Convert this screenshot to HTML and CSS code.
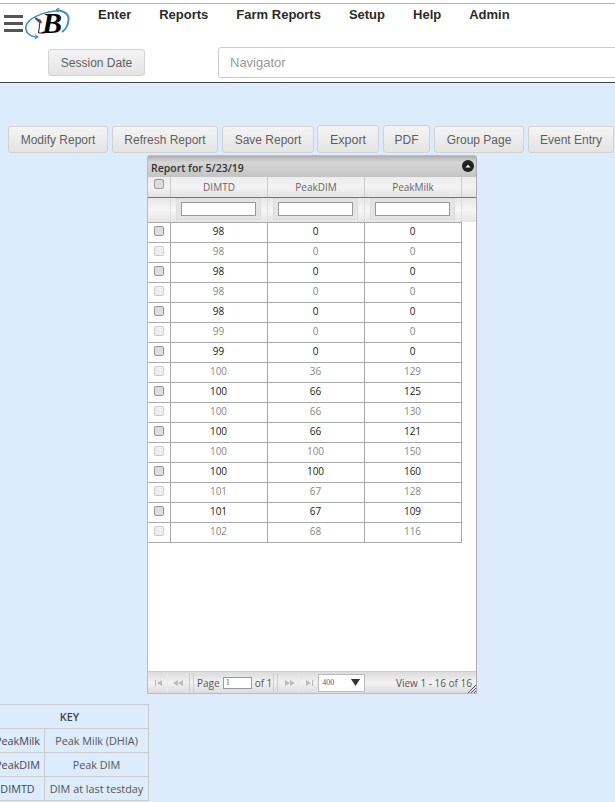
FILE: index.html
```html
<!DOCTYPE html>
<html lang="en">
<head>
<meta charset="utf-8">
<title>Report</title>
<link rel="stylesheet" href="styles.css">
</head>
<body>
<header class="site-header">
  <div class="top-row">
    <div class="burger"><span></span><span></span><span></span></div>
    <svg class="logo" viewBox="0 0 46 32" width="46" height="32">
      <path d="M33 3 C20 3 2 10 0.800 19 C0.500 25 5 29 13 29" fill="none" stroke="#3f8fd0" stroke-width="1.600"/>
      <path d="M13 29 l-3-2.400 M13 29 l-3.200 1.600" stroke="#3f8fd0" stroke-width="1.200" fill="none"/>
      <path d="M31 2 C40 3 44 7 43.500 12 C43 18 40 22 37 24" fill="none" stroke="#3f8fd0" stroke-width="2"/>
      <path d="M31 2 l3-2 M31 2 l3 2" stroke="#3f8fd0" stroke-width="1.100" fill="none"/>
      <path d="M10 9 l6 3 1 3 h-2 l-2-1 -3-3z" fill="#555"/>
      <path d="M15 14 L13.500 25 H20" fill="none" stroke="#222" stroke-width="1"/>
      <text class="logo-b" x="17" y="25">B</text>
    </svg>
    <nav class="main-nav">
      <a class="nav-enter">Enter</a>
      <a class="nav-reports">Reports</a>
      <a class="nav-farm">Farm Reports</a>
      <a class="nav-setup">Setup</a>
      <a class="nav-help">Help</a>
      <a>Admin</a>
    </nav>
  </div>
  <div class="tool-row">
    <button class="btn session">Session Date</button>
    <div class="navigator">Navigator</div>
  </div>
</header>

<main class="content">
  <div class="actions">
    <button class="btn">Modify Report</button>
    <button class="btn">Refresh Report</button>
    <button class="btn">Save Report</button>
    <button class="btn raised">Export</button>
    <button class="btn raised">PDF</button>
    <button class="btn">Group Page</button>
    <button class="btn">Event Entry</button>
  </div>

  <section class="grid">
    <div class="caption">
      <span>Report for 5/23/19</span>
      <span class="collapse"><svg viewBox="0 0 12 12" width="12" height="12"><circle cx="6" cy="6" r="6" fill="#222"/><path d="M3.500 7.500 L6 4.700 L8.500 7.500z" fill="#fff"/></svg></span>
    </div>
    <div class="head">
      <div class="hcell cb"><span class="check"></span></div>
      <div class="hcell">DIMTD</div>
      <div class="hcell">PeakDIM</div>
      <div class="hcell">PeakMilk</div>
    </div>
    <div class="filters">
      <div class="fcell cb"></div>
      <div class="fcell"><span class="fbox"><input class="finput" type="text"></span></div>
      <div class="fcell"><span class="fbox"><input class="finput" type="text"></span></div>
      <div class="fcell"><span class="fbox"><input class="finput" type="text"></span></div>
    </div>
    <div class="body">
      <table class="rows">
        <tr class="on"><td class="cb"><span class="check"></span></td><td>98</td><td>0</td><td>0</td></tr>
        <tr class="off"><td class="cb"><span class="check"></span></td><td>98</td><td>0</td><td>0</td></tr>
        <tr class="on"><td class="cb"><span class="check"></span></td><td>98</td><td>0</td><td>0</td></tr>
        <tr class="off"><td class="cb"><span class="check"></span></td><td>98</td><td>0</td><td>0</td></tr>
        <tr class="on"><td class="cb"><span class="check"></span></td><td>98</td><td>0</td><td>0</td></tr>
        <tr class="off"><td class="cb"><span class="check"></span></td><td>99</td><td>0</td><td>0</td></tr>
        <tr class="on"><td class="cb"><span class="check"></span></td><td>99</td><td>0</td><td>0</td></tr>
        <tr class="off"><td class="cb"><span class="check"></span></td><td>100</td><td>36</td><td>129</td></tr>
        <tr class="on"><td class="cb"><span class="check"></span></td><td>100</td><td>66</td><td>125</td></tr>
        <tr class="off"><td class="cb"><span class="check"></span></td><td>100</td><td>66</td><td>130</td></tr>
        <tr class="on"><td class="cb"><span class="check"></span></td><td>100</td><td>66</td><td>121</td></tr>
        <tr class="off"><td class="cb"><span class="check"></span></td><td>100</td><td>100</td><td>150</td></tr>
        <tr class="on"><td class="cb"><span class="check"></span></td><td>100</td><td>100</td><td>160</td></tr>
        <tr class="off"><td class="cb"><span class="check"></span></td><td>101</td><td>67</td><td>128</td></tr>
        <tr class="on"><td class="cb"><span class="check"></span></td><td>101</td><td>67</td><td>109</td></tr>
        <tr class="off"><td class="cb"><span class="check"></span></td><td>102</td><td>68</td><td>116</td></tr>
      </table>
    </div>
    <div class="pager">
      <div class="pg-btn"><svg viewBox="0 0 10 8" width="10" height="8"><path d="M1 1v6h1V1z M8 1v6L3 4z" fill="#bbb"/></svg></div>
      <div class="pg-btn"><svg viewBox="0 0 12 8" width="12" height="8"><path d="M6 1v6L1 4z M11 1v6L6 4z" fill="#bbb"/></svg></div>
      <div class="pg-sep"></div>
      <div class="pg-page">Page <span class="pg-input">1</span> of 1</div>
      <div class="pg-sep"></div>
      <div class="pg-btn"><svg viewBox="0 0 12 8" width="12" height="8"><path d="M1 1v6l5-3z M6 1v6l5-3z" fill="#bbb"/></svg></div>
      <div class="pg-btn"><svg viewBox="0 0 10 8" width="10" height="8"><path d="M2 1v6l5-3z M8 1v6h1V1z" fill="#bbb"/></svg></div>
      <div class="pg-select"><span>400</span><svg viewBox="0 0 9 7" width="9" height="7"><path d="M0 0h9L4.500 7z" fill="#333"/></svg></div>
      <div class="pg-view">View 1 - 16 of 16</div>
      <svg class="resize" viewBox="0 0 8 8" width="8" height="8"><path d="M8 0L0 8 M8 3L3 8 M8 6L6 8" stroke="#555" stroke-width="1"/></svg>
    </div>
  </section>

  <table class="key">
    <tr><th colspan="2">KEY</th></tr>
    <tr><td class="k1">PeakMilk</td><td class="k2">Peak Milk (DHIA)</td></tr>
    <tr><td class="k1">PeakDIM</td><td class="k2">Peak DIM</td></tr>
    <tr><td class="k1">DIMTD</td><td class="k2">DIM at last testday</td></tr>
  </table>
</main>
</body>
</html>
```

FILE: styles.css
```css
* { box-sizing: border-box; }
html, body { margin: 0; padding: 0; }
body {
  width: 615px;
  height: 802px;
  overflow: hidden;
  background: #ddecfd;
  font-family: "Open Sans", sans-serif;
  color: #555;
}

.site-header {
  height: 80px;
  background: #fff;
  border-bottom: 1px solid #444;
  margin-top: 3px;
  border-top: 1px solid #b5b5b5;
  box-shadow: 0 -3px 0 #fff;
}
.top-row { display: flex; height: 42px; }
.burger {
  margin: 11px 0 0 4px;
  width: 19px;
  display: flex;
  flex-direction: column;
  gap: 4px;
}
.burger span { display: block; height: 3px; background: #555; }
.logo { margin: 4px 0 0 2px; flex: none; }
.logo-b {
  font-family: "Liberation Serif", serif;
  font-weight: bold;
  font-style: italic;
  font-size: 30px;
  fill: #000;
}
.main-nav {
  display: flex;
  margin-left: 27px;
  padding-top: 3px;
  font-family: "Liberation Sans", sans-serif;
  font-weight: bold;
  font-size: 13px;
  line-height: 16px;
  color: #2b2b2b;
}
.main-nav a { display: block; }
.nav-enter { margin-right: 28px; }
.nav-reports { margin-right: 28px; }
.nav-farm { margin-right: 28px; }
.nav-setup { margin-right: 28px; }
.nav-help { margin-right: 28px; }

.tool-row { display: flex; align-items: center; height: 31px; margin-top: 1px; }
.btn {
  flex: none;
  height: 27px;
  padding: 0 12px;
  border: 1px solid #d2d2d2;
  border-radius: 3px;
  background: linear-gradient(#f4f4f4, #e4e4e4);
  color: #5f5f5f;
  font-family: "Liberation Sans", sans-serif;
  font-size: 12px;
  white-space: nowrap;
}
.session { width: 97px; margin-left: 48px; padding: 0; }
.navigator {
  margin-left: 73px;
  flex: none;
  width: 420px;
  height: 31px;
  border: 1px solid #ccc;
  border-radius: 3px;
  padding-left: 11px;
  font-family: "Liberation Sans", sans-serif;
  font-size: 13px;
  line-height: 29px;
  color: #999;
}

.content { padding-top: 43px; }
.actions { display: flex; gap: 4px; margin-left: 8px; align-items: flex-end; height: 27px; }
.actions .btn { padding: 0; }
.actions .btn:nth-child(1) { width: 100px; }
.actions .btn:nth-child(2) { width: 106px; }
.actions .btn:nth-child(3) { width: 92px; }
.actions .btn:nth-child(4) { width: 62px; margin-left: -1px; font-size: 12.500px; }
.actions .btn:nth-child(5) { width: 47px; }
.actions .btn:nth-child(6) { width: 90px; }
.actions .btn:nth-child(7) { width: 86px; }
.actions .raised { height: 28px; margin-top: -1px; padding-top: 2px; }

.grid {
  margin: 2px 0 0 147px;
  width: 330px;
  height: 539px;
  border: 1px solid #bbb;
  border-right-color: #aaa;
  border-radius: 3px 3px 0 0;
  background: #fff;
  display: flex;
  flex-direction: column;
  position: relative;
}
.caption {
  height: 21px;
  flex: none;
  display: flex;
  justify-content: space-between;
  align-items: center;
  padding: 2px 2px 0 3px;
  background: linear-gradient(#b0b0b0, #d6d6d6 30%, #c4c4c4);
  font-size: 10.500px;
  font-weight: 600;
  color: #333;
}
.collapse { display: flex; margin-top: -3px; }

.head, .filters { display: flex; flex: none; }
.head { height: 21px; border-bottom: 1px solid #777; background: linear-gradient(#ececec, #f3f3f3 50%, #e4e4e4); }
.filters { height: 24px; background: linear-gradient(#e6e6e6, #f6f6f6 50%, #e6e6e6); }
.hcell {
  width: 97px;
  border-right: 1px solid #ccc;
  text-align: center;
  font-size: 10px;
  line-height: 21px;
  color: #666;
}
.hcell.cb, .fcell.cb { width: 23px; }
.hcell.cb { display: flex; justify-content: center; padding-top: 2px; }
.fcell { width: 97px; border-right: 1px solid #ddd; padding: 0 6px 0 5px; }
.fcell.cb { padding: 0; }
.fbox { display: block; padding: 3px 4px; background: #e4e4e4; border: 1px solid #ddd; height: 22px; }
.finput { display: block; width: 100%; height: 14px; border: 1px solid #999; padding: 0; background: #fff; }

.check {
  display: block;
  width: 10px;
  height: 10px;
  border: 1px solid #999;
  border-radius: 2px;
  background: #ddd;
}

.body { flex: 1; min-height: 0; }
.rows { border-collapse: collapse; table-layout: fixed; width: 313px; }
.rows td {
  height: 20px;
  width: 97px;
  padding: 0 0 2px;
  border: 1px solid #aaa;
  text-align: center;
  font-size: 10px;
  line-height: 17px;
}
.rows td.cb { width: 22px; border-left: 0; vertical-align: top; padding: 3px 0 0 6px; }
.rows tr.on td { color: #222; }
.rows tr.off td { color: #888; }
.rows tr.off .check { border-color: #ccc; background: #eee; }

.pager {
  flex: none;
  height: 22px;
  display: flex;
  align-items: center;
  padding-left: 2px;
  background: linear-gradient(#dcdcdc, #f2f2f2 50%, #dcdcdc);
  border-top: 1px solid #ccc;
  font-size: 10px;
  color: #555;
}
.pg-btn {
  width: 18px;
  height: 19px;
  display: flex;
  align-items: center;
  justify-content: center;
  border-right: 1px solid #e8e8e8;
  margin-right: 1px;
}
.pg-sep { width: 5px; height: 19px; border-left: 1px solid #ccc; border-right: 1px solid #ccc; margin: 0 3px 0 1px; }
.pg-page { white-space: nowrap; display: flex; align-items: center; gap: 3px; }
.pg-input {
  width: 29px;
  height: 12px;
  background: #fff;
  border: 1px solid #999;
  font-family: "Liberation Serif", serif;
  font-size: 8px;
  line-height: 10px;
  padding-left: 2px;
  color: #557;
}
.pg-select {
  width: 47px;
  height: 18px;
  margin-left: -1px;
  background: #fff;
  border: 1px solid #bbb;
  display: flex;
  justify-content: space-between;
  align-items: center;
  padding: 0 4px 0 3px;
  font-family: "Liberation Serif", serif;
  font-size: 8px;
  color: #557;
}
.pg-view { margin-left: auto; padding-right: 4px; white-space: nowrap; font-size: 10px; }
.resize { position: absolute; right: 0; bottom: 0; }

.key {
  margin: 10px 0 0 -10px;
  border-collapse: collapse;
  width: 159px;
  font-size: 10.800px;
  color: #555;
}
.key th, .key td {
  border: 1px solid #ccc;
  height: 24px;
  padding: 0;
  text-align: center;
  white-space: nowrap;
}
.key th { font-weight: 600; color: #444; }
.k1 { width: 54px; color: #445; }
```
